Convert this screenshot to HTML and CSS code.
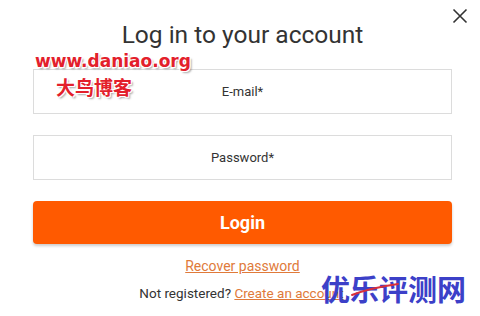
FILE: index.html
```html
<!DOCTYPE html>
<html>
<head>
<meta charset="utf-8">
<link rel="stylesheet" href="styles.css">
</head>
<body>
<div class="modal">
  <button class="close" aria-label="Close">
    <svg width="16" height="16" viewBox="0 0 16 16"><path d="M1.5 1.5L14.5 14.5M14.5 1.5L1.5 14.5" stroke="#333" stroke-width="1.6" fill="none"/></svg>
  </button>
  <h1 class="title">Log in to your account</h1>
  <form class="form">
    <div class="field">E-mail*</div>
    <div class="field">Password*</div>
    <div class="btn">Login</div>
  </form>
  <a class="recover" href="#">Recover password</a>
  <p class="register">Not registered? <a href="#">Create an account</a></p>
  <div class="wm wm-url">www.daniao.org</div>
  <div class="wm wm-cn">大鸟博客</div>
  <div class="wm wm-blue">优乐评测网</div>
  <svg class="swoosh" width="60" height="20" viewBox="0 0 60 20"><path d="M2 15 Q20 8 48 4" stroke="#d9303a" stroke-width="2" fill="none" stroke-linecap="round"/></svg>
</div>
</body>
</html>
```
FILE: styles.css
```css
* { box-sizing: border-box; }
html, body { margin: 0; padding: 0; background: #fff; }
body { width: 480px; height: 316px; overflow: hidden; font-family: Roboto, "Liberation Sans", sans-serif; color: #333; }
.modal { position: relative; width: 480px; height: 316px; padding: 20px 28px 0 33px; display: flex; flex-direction: column; align-items: center; }
.close { position: absolute; top: 8px; right: 12px; background: none; border: 0; padding: 0; width: 16px; height: 16px; }
.close svg { display: block; }
.title { margin: 0; font-size: 24.5px; font-weight: 400; line-height: 30px; color: #333; }
.form { width: 419px; margin-top: 19px; display: flex; flex-direction: column; }
.field { height: 45px; border: 1px solid #dcdcdc; display: flex; align-items: center; justify-content: center; font-size: 13px; color: #333; margin-bottom: 21px; }
.btn { height: 43px; background: #ff5a00; border-radius: 4px; color: #fff; font-weight: 700; font-size: 18px; display: flex; align-items: center; justify-content: center; box-shadow: 0 2px 3px rgba(0,0,0,0.2); }
.recover { margin-top: 14px; font-size: 14px; color: #e07a3a; text-decoration: underline; line-height: 16px; }
.register { margin: 11px 0 0; font-size: 13.5px; line-height: 16px; color: #333; padding-right: 2px; }
.register a { color: #e07a3a; }
.wm { position: absolute; font-weight: 700; color: #e3202b; text-shadow: 1px 1px 0 #fff, -1px -1px 0 #fff, 1px -1px 0 #fff, -1px 1px 0 #fff, 2px 2px 2px rgba(0,0,0,0.35); }
.wm-url { left: 35px; top: 51px; font-family: "DejaVu Sans", sans-serif; font-size: 17px; letter-spacing: 0; }
.wm-cn { left: 56px; top: 75px; font-family: "Noto Sans CJK SC", sans-serif; font-size: 19px; line-height: 24px; }
.wm-blue { left: 321px; top: 271px; font-family: "Noto Sans CJK SC", sans-serif; font-size: 29px; line-height: 34px; color: #3c40c8; text-shadow: none; }
.swoosh { position: absolute; left: 350px; top: 280px; }
```
